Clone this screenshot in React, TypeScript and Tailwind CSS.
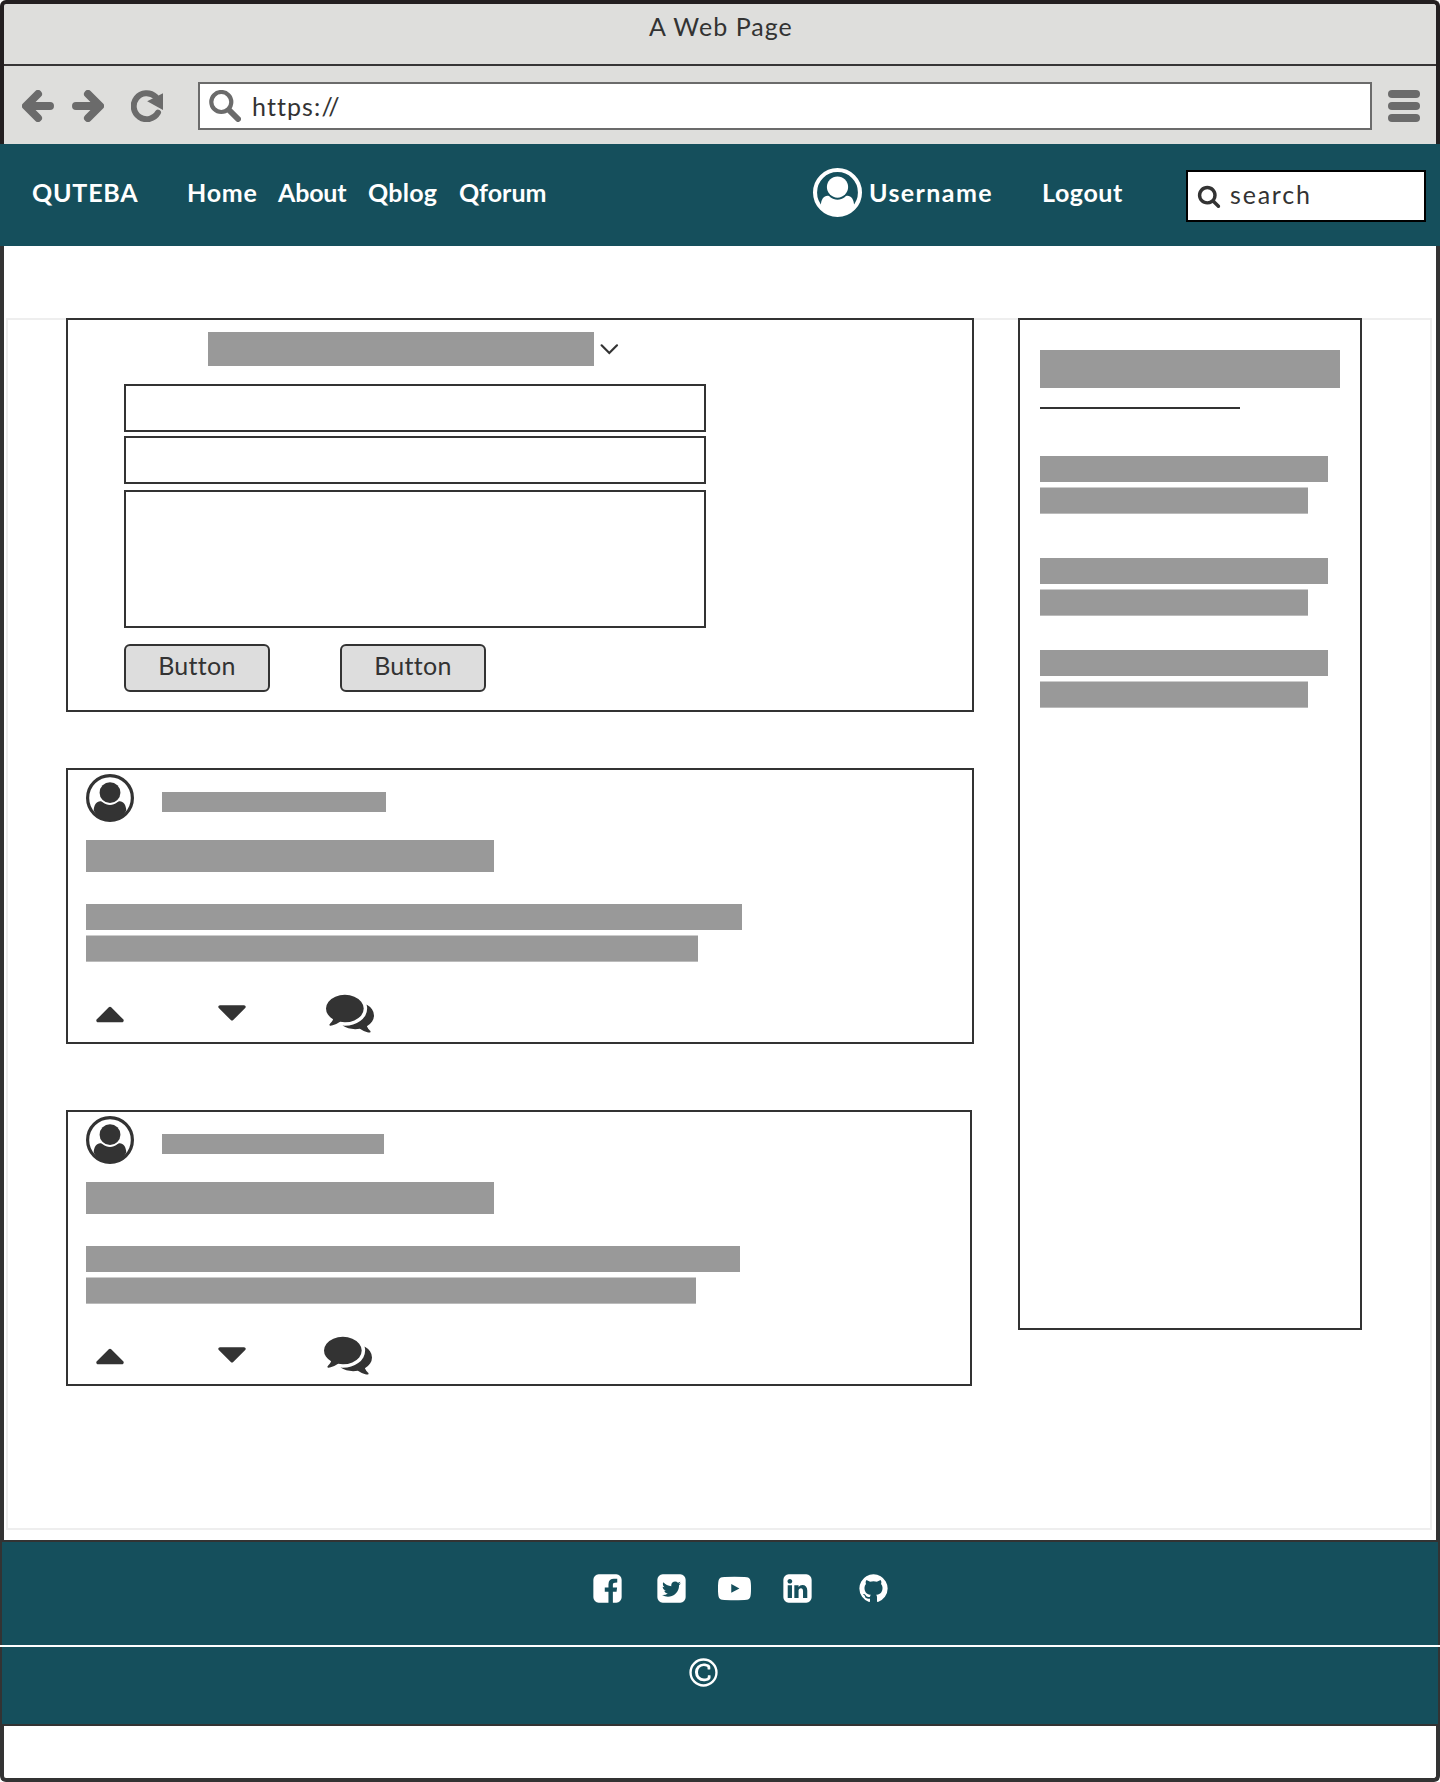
import React from 'react';

const ICONS = {
  facebook:
    'M1376 128q119 0 203.5 84.5t84.5 203.5v960q0 119-84.5 203.5t-203.5 84.5h-188v-595h199l30-232h-229v-148q0-56 23.5-84t91.5-28l122-1v-207q-63-9-178-9-136 0-217.5 80t-81.5 226v171h-200v232h200v595h-532q-119 0-203.5-84.5t-84.5-203.5v-960q0-119 84.5-203.5t203.5-84.5h960z',
  twitter:
    'M1408 610q-56 25-121 34 68-40 93-117-65 38-134 51-61-66-153-66-87 0-148.5 61.5t-61.5 148.5q0 29 5 48-129-7-242-65t-192-155q-29 50-29 106 0 114 91 175-47-1-100-26v2q0 75 50 133.5t123 72.5q-29 8-51 8-13 0-39-4 21 63 74.5 104t121.5 42q-116 90-261 90-26 0-50-3 148 94 322 94 112 0 210-35.5t168-95 120.5-137 75-162 24.5-168.5q0-18-1-27 63-45 105-109zm256-194v960q0 119-84.5 203.5t-203.5 84.5h-960q-119 0-203.5-84.5t-84.5-203.5v-960q0-119 84.5-203.5t203.5-84.5h960q119 0 203.5 84.5t84.5 203.5z',
  youtube:
    'M720 655L1165 896L720 1130zM1792 896q0 96-1 150t-8.5 136.5-22.5 147.5q-16 73-69 123t-124 58q-222 25-671 25t-671-25q-71-8-124.5-58t-69.5-123q-14-65-21.5-147.5t-8.5-136.5-1-150 1-150 8.5-136.5 22.5-147.5q16-73 69-123t124-58q222-25 671-25t671 25q71 8 124.5 58t69.5 123q14 65 21.5 147.5t8.5 136.5 1 150z',
  linkedin:
    'M365 1414h231v-694h-231v694zm246-908q-1-52-36-86t-93-34-94.5 34-36.5 86q0 51 35.5 85.5t92.5 34.5h1q59 0 95-34.5t36-85.5zm585 908h231v-398q0-154-73-233t-193-79q-136 0-209 117h2v-101h-231q3 66 0 694h231v-388q0-38 7-56 15-35 45-59.5t74-24.5q116 0 116 157v371zm468-998v960q0 119-84.5 203.5t-203.5 84.5h-960q-119 0-203.5-84.5t-84.5-203.5v-960q0-119 84.5-203.5t203.5-84.5h960q119 0 203.5 84.5t84.5 203.5z',
  github:
    'M896 128q209 0 385.5 103t279.5 279.5 103 385.5q0 251-146.5 451.5t-378.5 277.5q-27 5-40-7t-13-30q0-3 .5-76.5t.5-134.5q0-97-52-142 57-6 102.5-18t94-39 81-66.5 53-105 20.5-150.5q0-119-79-206 37-91-8-204-28-9-81 11t-92 44l-38 24q-93-26-192-26t-192 26q-16-11-42.5-27t-83.5-38.5-85-13.5q-45 113-8 204-79 87-79 206 0 85 20.5 150t52.5 105 80.5 67 94 39 102.5 18q-39 36-49 103-21 10-45 15t-57 5-65.5-21.5-55.5-62.5q-19-32-48.5-52t-49.5-24l-20-3q-21 0-29 4.5t-5 11.5 9 14 13 12l7 5q22 10 43.5 38t31.5 51l10 23q13 38 44 61.5t67 30 69.5 7 55.5-3.5l23-4q0 38 .5 88.5t.5 54.5q0 18-13 30t-40 7q-232-77-378.5-277.5t-146.5-451.5q0-209 103-385.5t279.5-279.5 385.5-103z',
  copyright:
    'M1278 1066v109q0 50-36.5 89t-94 60.5-118 32.5-117.5 11q-205 0-342-139t-137-346q0-203 136-339t339-136q34 0 75.5 4.5t93 18 92.5 34 69 56.5 28 81v109q0 16-16 16h-118q-16 0-16-16v-70q0-43-65.5-67.5t-137.5-24.5q-140 0-228.5 91.5t-88.5 237.5q0 151 91.5 249.5t233.5 98.5q68 0 138-24t70-66v-70q0-7 4.5-11.5t10.5-4.5h119q6 0 11 4.5t5 11.5zM896 128a768 768 0 1 0 0 1536a768 768 0 1 0 0-1536zM896 256a640 640 0 1 1 0 1280a640 640 0 1 1 0-1280z',
  comments:
    'M1408 768q0 139-94 257t-256.5 186.5-353.5 68.5q-86 0-176-16-124 88-278 128-36 9-86 16h-3q-11 0-20.5-8t-11.5-21q-1-3-1-6.5t.5-6.5 2-6l2.5-5 3.5-5.5 4-5 4.5-5 4-4.5q5-6 23-25t26-29.5 22.5-29 25-38.5 20.5-44q-124-72-195-177t-71-224q0-139 94-257t256.5-186.5 353.5-68.5 353.5 68.5 256.5 186.5 94 257zm384 256q0 120-71 224.5t-195 176.5q10 24 20.5 44t25 38.5 22.5 29 26 29.5 23 25q1 1 4 4.5t4.5 5 4 5 3.5 5.5l2.5 5 2 6 .5 6.5-1 6.5q-3 14-13 22t-22 7q-50-7-86-16-154-40-278-128-90 16-176 16-271 0-472-132 58 4 88 4 161 0 309-45t264-129q125-92 192-212t67-254q0-77-23-152 129 71 204 178t75 230z',
  caretUp:
    'M1408 1216q0 26-19 45t-45 19h-896q-26 0-45-19t-19-45 19-45l448-448q19-19 45-19t45 19l448 448q19 19 19 45z',
  caretDown:
    'M1408 704q0 26-19 45l-448 448q-19 19-45 19t-45-19l-448-448q-19-19-19-45t19-45 45-19h896q26 0 45 19t19 45z',
  search:
    'M1216 832q0-185-131.5-316.5t-316.5-131.5-316.5 131.5-131.5 316.5 131.5 316.5 316.5 131.5 316.5-131.5 131.5-316.5zm512 832q0 52-38 90t-90 38q-54 0-90-38l-343-342q-179 124-399 124-143 0-273.5-55.5t-225-150-150-225-55.5-273.5 55.5-273.5 150-225 225-150 273.5-55.5 273.5 55.5 225 150 150 225 55.5 273.5q0 220-124 399l343 343q37 37 37 90z',
};

function Icon({ name, className }: { name: keyof typeof ICONS; className: string }) {
  return (
    <svg viewBox="0 0 1792 1792" fill="currentColor" fillRule="evenodd" className={`block shrink-0 ${className}`}>
      <path d={ICONS[name]} />
    </svg>
  );
}

function UserIcon({ className, ring }: { className: string; ring: number }) {
  return (
    <svg viewBox="0 0 48 48" className={`block shrink-0 ${className}`} fill="currentColor">
      <circle cx="24" cy="24" r={24 - ring / 2} fill="none" stroke="currentColor" strokeWidth={ring} />
      <circle cx="24" cy="18.7" r="10.4" />
      <path d="M7.7 36.5C8 31 10.5 27.3 14.3 27.3C15.5 27.3 16.2 28 17 28.6C19 30.2 21.4 31 24 31C26.6 31 29 30.2 31 28.6C31.8 28 32.5 27.3 33.7 27.3C37.5 27.3 40 31 40.3 36.5C37 43 31 46.5 24 46.5C17 46.5 11 43 7.7 36.5Z" />
    </svg>
  );
}

function BrowserChrome() {
  return (
    <header className="h-36 shrink-0 rounded-t-md border-x-4 border-t-4 border-[#231f20] bg-[#dededc]">
      <div className="flex h-[62px] justify-center border-b-2 border-[#373536] pt-[7px]">
        <span className="h-[30px] pl-0.5 tracking-[1.05px]">A Web Page</span>
      </div>
      <div className="flex h-[78px] items-start pt-4 pl-[18px] text-[#6b6b6b]">
        <svg viewBox="0 0 32 32" className="mt-2 block size-8" fill="none" stroke="currentColor" strokeWidth="8" strokeLinecap="round" strokeLinejoin="round">
          <path d="M28 16H6M16 4L4 16L16 28" />
        </svg>
        <svg viewBox="0 0 32 32" className="mt-2 ml-[18px] block size-8" fill="none" stroke="currentColor" strokeWidth="8" strokeLinecap="round" strokeLinejoin="round">
          <path d="M4 16H26M16 4L28 16L16 28" />
        </svg>
        <svg viewBox="0 0 32 32" className="mt-2 ml-[27px] block size-8">
          <path d="M24.5 6.6A13 13 0 1 0 27 22.6" fill="none" stroke="currentColor" strokeWidth="6" strokeLinecap="round" />
          <path d="M32 3.2V20L16.2 11.3Z" fill="currentColor" />
        </svg>
        <div className="ml-[35px] flex h-12 w-[1174px] border-2 border-[#6b6b6b] bg-white pl-[9px]">
          <svg viewBox="0 0 32 32" className="mt-1.5 block size-8" fill="none" stroke="currentColor" strokeLinecap="round">
            <circle cx="12.3" cy="12" r="10" strokeWidth="4.2" />
            <path d="M20.5 20.5L29 29" strokeWidth="6" />
          </svg>
          <span className="mt-[7px] ml-[11px] tracking-[1.1px] text-[#333]">https://</span>
        </div>
        <div className="mt-2 ml-4 flex w-8 flex-col gap-1">
          <span className="h-2 rounded-full bg-[#6b6b6b]" />
          <span className="h-2 rounded-full bg-[#6b6b6b]" />
          <span className="h-2 rounded-full bg-[#6b6b6b]" />
        </div>
      </div>
    </header>
  );
}

function NavBar() {
  return (
    <nav className="flex h-[102px] shrink-0 items-start bg-[#154f5c] pt-[33px] font-bold whitespace-nowrap text-white">
      <span className="ml-8 w-[155px] tracking-[0.8px]">QUTEBA</span>
      <span className="w-[91px] tracking-[0.8px]">Home</span>
      <span className="w-[90px] tracking-[-0.2px]">About</span>
      <span className="w-[91px] tracking-[0.3px]">Qblog</span>
      <span className="w-[354px]">Qforum</span>
      <UserIcon ring={4} className="-mt-[9px] size-[49px]" />
      <span className="ml-[7px] w-[173px] tracking-[1.4px]">Username</span>
      <span className="w-[144px] tracking-[0.6px]">Logout</span>
      <div className="-mt-[7px] flex h-[52px] w-60 border-2 border-black bg-white pl-[9px] font-normal text-[#333]">
        <Icon name="search" className="mt-3 size-6" />
        <span className="mt-[7px] ml-[9px] tracking-[1.8px]">search</span>
      </div>
    </nav>
  );
}

function Button() {
  return (
    <button className="flex h-12 w-[146px] justify-center rounded-md border-2 border-[#333] bg-[#ddd] pt-1">
      <span className="tracking-[0.3px]">Button</span>
    </button>
  );
}

function PostForm() {
  return (
    <section className="h-[394px] w-[908px] border-2 border-[#333] pt-3 pl-14">
      <div className="ml-[84px] flex items-start">
        <div className="h-[34px] w-[386px] bg-[#999]" />
        <svg viewBox="0 0 18 10" className="mt-3 ml-1.5 block h-2.5 w-[18px] overflow-visible" fill="none" stroke="#333" strokeWidth="2.2" strokeLinecap="round">
          <path d="M1.6 1.3L9.3 9L17 1.3" />
        </svg>
      </div>
      <div className="mt-[18px] h-12 w-[582px] border-2 border-[#333]" />
      <div className="mt-1 h-12 w-[582px] border-2 border-[#333]" />
      <div className="mt-1.5 h-[138px] w-[582px] border-2 border-[#333]" />
      <div className="mt-4 flex gap-[70px]">
        <Button />
        <Button />
      </div>
    </section>
  );
}

type PostProps = { card: string; name: string; line1: string; line2: string; comments: string };

function Post({ card, name, line1, line2, comments }: PostProps) {
  return (
    <article className={`h-[276px] border-2 border-[#333] pt-1 pl-[18px] ${card}`}>
      <div className="flex items-start">
        <UserIcon ring={3.2} className="size-12" />
        <div className={`mt-[18px] ml-7 h-5 bg-[#999] ${name}`} />
      </div>
      <div className="mt-[18px] h-8 w-[408px] bg-[#999]" />
      <div className={`mt-8 h-[26px] bg-[#999] ${line1}`} />
      <div className={`mt-[5px] h-[27px] border-t border-b border-t-[#ccc] border-b-[#bbb] bg-[#999] ${line2}`} />
      <div className="mt-[26px] flex">
        <Icon name="caretUp" className="size-12" />
        <Icon name="caretDown" className="ml-[74px] size-12" />
        <Icon name="comments" className={`size-12 ${comments}`} />
      </div>
    </article>
  );
}

function SidebarEntry({ className }: { className: string }) {
  return (
    <div className={className}>
      <div className="h-[26px] w-72 bg-[#999]" />
      <div className="mt-[5px] h-[27px] w-[268px] border-t border-b border-t-[#ccc] border-b-[#bbb] bg-[#999]" />
    </div>
  );
}

function Sidebar() {
  return (
    <aside className="ml-11 h-[1012px] w-[344px] border-2 border-[#333] pt-[30px] pl-5">
      <div className="h-[38px] w-[300px] bg-[#999]" />
      <div className="mt-[19px] h-0.5 w-[200px] bg-[#333]" />
      <SidebarEntry className="mt-[47px]" />
      <SidebarEntry className="mt-11" />
      <SidebarEntry className="mt-[34px]" />
    </aside>
  );
}

function Footer() {
  return (
    <footer className="-mx-1 mt-2.5 h-[186px] text-white">
      <div className="flex h-[105px] items-start border-x-2 border-t-2 border-[#333] bg-[#154f5c] pt-[30px] pl-[589px]">
        <Icon name="facebook" className="size-[33px]" />
        <Icon name="twitter" className="ml-[31px] size-[33px]" />
        <Icon name="youtube" className="ml-[30px] size-[33px]" />
        <Icon name="linkedin" className="ml-[30px] size-[33px]" />
        <Icon name="github" className="ml-[43px] size-[33px]" />
      </div>
      <div className="h-0.5 bg-white" />
      <div className="h-[79px] border-x-2 border-b-2 border-[#333] bg-[#154f5c] pt-[9px] pl-[685px]">
        <Icon name="copyright" className="size-[33px]" />
      </div>
    </footer>
  );
}

export default function App() {
  return (
    <div className="flex h-[1782px] w-[1440px] flex-col bg-white font-['Lato','Liberation_Sans',sans-serif] text-[25px] leading-[30px] text-[#333]">
      <BrowserChrome />
      <NavBar />
      <div className="flex-1 rounded-b-md border-x-4 border-b-4 border-[#333] pt-[72px]">
        <main className="ml-0.5 flex h-[1212px] w-[1426px] border-2 border-[#eee]">
          <div className="-mt-0.5 ml-[58px] w-[908px]">
            <PostForm />
            <div className="mt-14">
              <Post card="w-[908px]" name="w-56" line1="w-[656px]" line2="w-[612px]" comments="ml-[70px]" />
            </div>
            <div className="mt-[66px]">
              <Post card="w-[906px]" name="w-[222px]" line1="w-[654px]" line2="w-[610px]" comments="ml-[68px]" />
            </div>
          </div>
          <div className="-mt-0.5">
            <Sidebar />
          </div>
        </main>
        <Footer />
      </div>
    </div>
  );
}
